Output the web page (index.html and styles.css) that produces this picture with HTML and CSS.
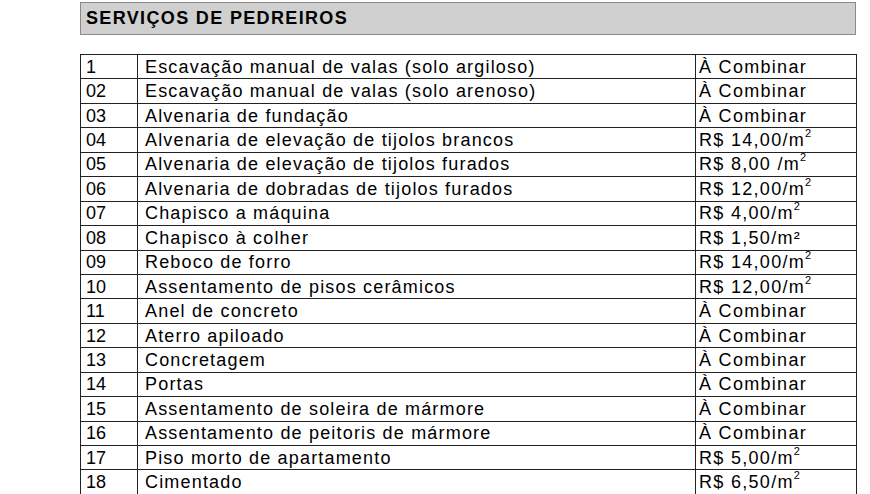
FILE: index.html
```html
<!DOCTYPE html>
<html lang="pt">
<head>
<meta charset="utf-8">
<title>Serviços de Pedreiros</title>
<link rel="stylesheet" href="styles.css">
</head>
<body>
<div class="page">
  <div class="title">SERVIÇOS DE PEDREIROS</div>
  <table class="prices">
    <colgroup><col class="c-num"><col class="c-desc"><col class="c-price"></colgroup>
    <tbody>
      <tr><td>1</td><td>Escavação manual de valas (solo argiloso)</td><td>À Combinar</td></tr>
      <tr><td>02</td><td>Escavação manual de valas (solo arenoso)</td><td>À Combinar</td></tr>
      <tr><td>03</td><td>Alvenaria de fundação</td><td>À Combinar</td></tr>
      <tr><td>04</td><td>Alvenaria de elevação de tijolos brancos</td><td>R$ 14,00/m<sup>2</sup></td></tr>
      <tr><td>05</td><td>Alvenaria de elevação de tijolos furados</td><td>R$ 8,00 /m<sup>2</sup></td></tr>
      <tr><td>06</td><td>Alvenaria de dobradas de tijolos furados</td><td>R$ 12,00/m<sup>2</sup></td></tr>
      <tr><td>07</td><td>Chapisco a máquina</td><td>R$ 4,00/m<sup>2</sup></td></tr>
      <tr><td>08</td><td>Chapisco à colher</td><td>R$ 1,50/m²</td></tr>
      <tr><td>09</td><td>Reboco de forro</td><td>R$ 14,00/m<sup>2</sup></td></tr>
      <tr><td>10</td><td>Assentamento de pisos cerâmicos</td><td>R$ 12,00/m<sup>2</sup></td></tr>
      <tr><td>11</td><td>Anel de concreto</td><td>À Combinar</td></tr>
      <tr><td>12</td><td>Aterro apiloado</td><td>À Combinar</td></tr>
      <tr><td>13</td><td>Concretagem</td><td>À Combinar</td></tr>
      <tr><td>14</td><td>Portas</td><td>À Combinar</td></tr>
      <tr><td>15</td><td>Assentamento de soleira de mármore</td><td>À Combinar</td></tr>
      <tr><td>16</td><td>Assentamento de peitoris de mármore</td><td>À Combinar</td></tr>
      <tr><td>17</td><td>Piso morto de apartamento</td><td>R$ 5,00/m<sup>2</sup></td></tr>
      <tr><td>18</td><td>Cimentado</td><td>R$ 6,50/m<sup>2</sup></td></tr>
    </tbody>
  </table>
</div>
</body>
</html>
```
FILE: styles.css
```css
html, body {
  margin: 0;
  padding: 0;
  background: #fff;
}
.page {
  padding: 2px 0 0 80px;
  width: 776px;
  font-family: "Liberation Sans", Arial, sans-serif;
  color: #000;
}
.title {
  box-sizing: border-box;
  height: 33px;
  background: #d0d0d0;
  border: 1px solid #8a8a8a;
  font-weight: bold;
  font-size: 18px;
  line-height: 31px;
  padding-left: 5px;
  letter-spacing: 1.35px;
}
.prices {
  margin-top: 19px;
  width: 776px;
  border-collapse: collapse;
  table-layout: fixed;
  font-size: 18px;
}
.c-num { width: 57px; }
.c-desc { width: 558px; }
.c-price { width: 161px; }
.prices td {
  border: 1px solid #222;
  height: 23.45px;
  padding: 0 0 0 5px;
  line-height: 20px;
  white-space: nowrap;
  overflow: hidden;
  vertical-align: middle;
}
.prices td:nth-child(2) {
  padding-left: 7px;
  letter-spacing: 1.18px;
}
.prices td:nth-child(3) {
  padding-left: 3px;
  letter-spacing: 1.3px;
}
.prices sup {
  font-size: 11px;
  line-height: 0;
  vertical-align: 9px;
  letter-spacing: 0;
}
```
